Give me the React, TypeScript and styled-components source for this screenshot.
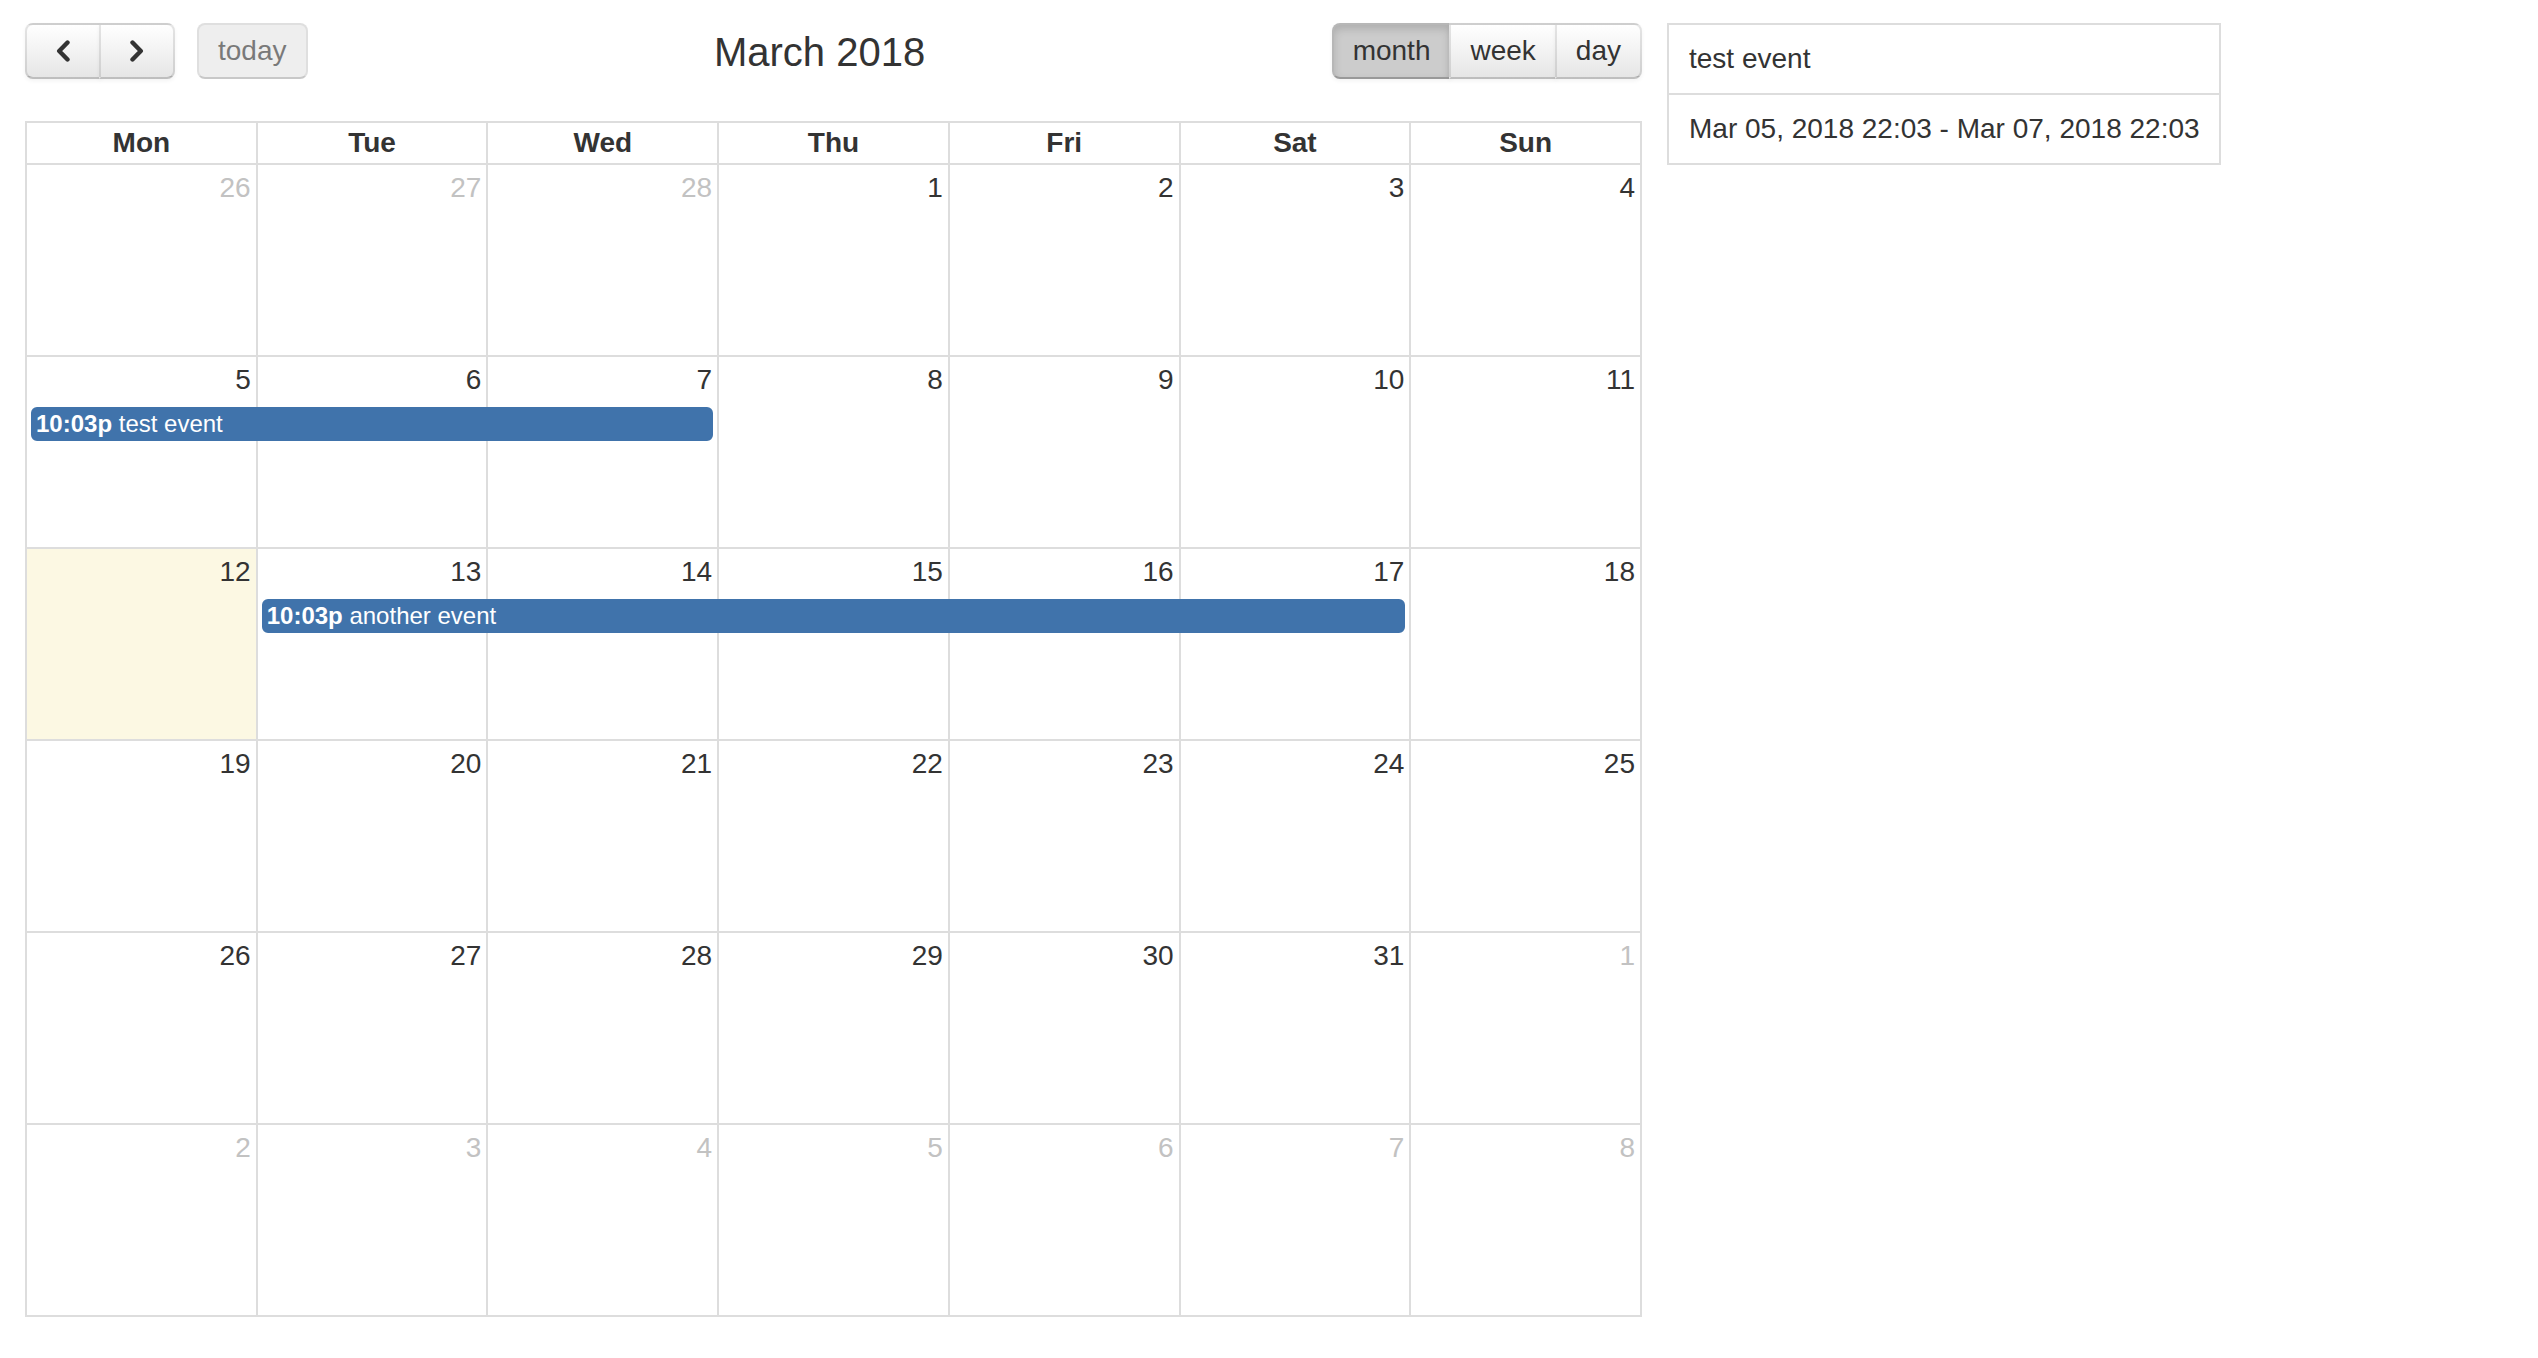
import styled, { createGlobalStyle, css } from "styled-components";

const GlobalStyle = createGlobalStyle`
  html, body {
    margin: 0;
    padding: 0;
    background: #fff;
  }
  body {
    font-family: "Liberation Sans", Arial, Helvetica, sans-serif;
    font-size: 28px;
    color: #333;
  }
  * {
    box-sizing: border-box;
  }
`;

const Page = styled.div`
  display: flex;
  align-items: flex-start;
  gap: 25px;
  padding: 23px 25px;
`;

const Calendar = styled.div`
  flex: none;
  width: 1617px;
`;

const Toolbar = styled.div`
  display: grid;
  grid-template-columns: auto 1fr auto;
  align-items: center;
  height: 56px;
  margin-bottom: 42px;
`;

const ToolbarLeft = styled.div`
  display: flex;
  gap: 22px;
`;

const ButtonGroup = styled.div`
  display: flex;
`;

const Title = styled.h2`
  margin: 0;
  font-size: 40px;
  font-weight: normal;
  line-height: 46px;
  text-align: center;
  padding-top: 2px;
`;

const Button = styled.button<{ $active?: boolean; $disabled?: boolean; $icon?: boolean }>`
  display: flex;
  align-items: center;
  justify-content: center;
  height: 56px;
  padding: 0 19px;
  ${(p) => p.$icon && css`
    width: 76px;
    padding: 0;
  `}
  font-family: inherit;
  font-size: 28px;
  color: #333;
  border: 2px solid;
  border-color: rgba(0, 0, 0, 0.1) rgba(0, 0, 0, 0.1) rgba(0, 0, 0, 0.25);
  background-color: #f5f5f5;
  background-image: linear-gradient(to bottom, #fff, #e6e6e6);
  box-shadow: inset 0 2px 0 rgba(255, 255, 255, 0.2), 0 2px 4px rgba(0, 0, 0, 0.05);
  border-radius: 0;
  cursor: pointer;

  & + & {
    margin-left: -2px;
  }
  &:first-child {
    border-top-left-radius: 8px;
    border-bottom-left-radius: 8px;
  }
  &:last-child {
    border-top-right-radius: 8px;
    border-bottom-right-radius: 8px;
  }

  ${(p) => p.$active && css`
    background-color: #ccc;
    background-image: none;
    box-shadow: inset 0 4px 8px rgba(0, 0, 0, 0.15), 0 2px 4px rgba(0, 0, 0, 0.05);
  `}

  ${(p) => p.$disabled && css`
    background-color: #e6e6e6;
    background-image: none;
    box-shadow: none;
    opacity: 0.65;
    cursor: default;
  `}
`;

const Month = styled.div`
  display: flex;
  flex-direction: column;
  gap: 2px;
  padding: 2px;
  background: #ddd;
`;

const HeadRow = styled.div`
  display: grid;
  grid-template-columns: repeat(7, 1fr);
  column-gap: 2px;
`;

const HeadCell = styled.div`
  height: 40px;
  line-height: 40px;
  background: #fff;
  text-align: center;
  font-weight: bold;
  font-size: 28px;
`;

const Week = styled.div`
  display: grid;
  grid-template-columns: repeat(7, 1fr);
  grid-template-rows: 44px auto 1fr;
  column-gap: 2px;
  height: 190px;
`;

const DayBg = styled.div<{ $col: number; $today?: boolean }>`
  grid-column: ${(p) => p.$col};
  grid-row: 1 / -1;
  background: ${(p) => (p.$today ? "#fcf8e3" : "#fff")};
`;

const DayNumber = styled.div<{ $col: number; $other?: boolean }>`
  grid-column: ${(p) => p.$col};
  grid-row: 1;
  justify-self: end;
  padding: 7px 5px 5px;
  line-height: 32px;
  font-size: 28px;
  color: ${(p) => (p.$other ? "#c2c2c2" : "#333")};
`;

const EventBar = styled.div<{ $start: number; $span: number }>`
  grid-column: ${(p) => p.$start} / span ${(p) => p.$span};
  grid-row: 2;
  margin: 6px 4px 0;
  height: 34px;
  padding: 0 3px;
  line-height: 30px;
  font-size: 24px;
  color: #fff;
  background: #4073ab;
  border: 2px solid #4073ab;
  border-radius: 6px;
  white-space: nowrap;
  overflow: hidden;
`;

const EventTime = styled.span`
  font-weight: bold;
`;

const Panel = styled.ul`
  flex: none;
  width: 554px;
  margin: 0;
  padding: 0;
  list-style: none;
  border: 2px solid #ddd;
`;

const PanelItem = styled.li`
  padding: 14px 20px;
  line-height: 40px;
  font-size: 28px;
  color: #333;
  white-space: nowrap;

  & + & {
    border-top: 2px solid #ddd;
  }
`;

const Chevron = ({ dir }: { dir: "left" | "right" }) => (
  <svg width="16" height="22" viewBox="0 0 16 22">
    <path
      d={dir === "left" ? "M12.5 2.5 L4.2 11 L12.5 19.5" : "M3.5 2.5 L11.8 11 L3.5 19.5"}
      fill="none"
      stroke="#333"
      strokeWidth="4.4"
      strokeLinecap="round"
      strokeLinejoin="round"
    />
  </svg>
);

type Day = { n: number; other?: boolean; today?: boolean };
type CalEvent = { start: number; span: number; time: string; title: string };

const dayNames = ["Mon", "Tue", "Wed", "Thu", "Fri", "Sat", "Sun"];

const weeks: { days: Day[]; events: CalEvent[] }[] = [
  {
    days: [
      { n: 26, other: true },
      { n: 27, other: true },
      { n: 28, other: true },
      { n: 1 },
      { n: 2 },
      { n: 3 },
      { n: 4 },
    ],
    events: [],
  },
  {
    days: [5, 6, 7, 8, 9, 10, 11].map((n) => ({ n })),
    events: [{ start: 1, span: 3, time: "10:03p", title: "test event" }],
  },
  {
    days: [12, 13, 14, 15, 16, 17, 18].map((n) => ({ n, today: n === 12 })),
    events: [{ start: 2, span: 5, time: "10:03p", title: "another event" }],
  },
  { days: [19, 20, 21, 22, 23, 24, 25].map((n) => ({ n })), events: [] },
  {
    days: [...[26, 27, 28, 29, 30, 31].map((n) => ({ n })), { n: 1, other: true }],
    events: [],
  },
  { days: [2, 3, 4, 5, 6, 7, 8].map((n) => ({ n, other: true })), events: [] },
];

export default function App() {
  return (
    <>
      <GlobalStyle />
      <Page>
        <Calendar>
          <Toolbar>
            <ToolbarLeft>
              <ButtonGroup>
                <Button $icon type="button" aria-label="prev">
                  <Chevron dir="left" />
                </Button>
                <Button $icon type="button" aria-label="next">
                  <Chevron dir="right" />
                </Button>
              </ButtonGroup>
              <ButtonGroup>
                <Button $disabled type="button">
                  today
                </Button>
              </ButtonGroup>
            </ToolbarLeft>
            <Title>March 2018</Title>
            <ButtonGroup>
              <Button $active type="button">
                month
              </Button>
              <Button type="button">week</Button>
              <Button type="button">day</Button>
            </ButtonGroup>
          </Toolbar>

          <Month>
            <HeadRow>
              {dayNames.map((d) => (
                <HeadCell key={d}>{d}</HeadCell>
              ))}
            </HeadRow>
            {weeks.map((w, wi) => (
              <Week key={wi}>
                {w.days.map((d, i) => (
                  <DayBg key={`bg${i}`} $col={i + 1} $today={d.today} />
                ))}
                {w.days.map((d, i) => (
                  <DayNumber key={`n${i}`} $col={i + 1} $other={d.other}>
                    {d.n}
                  </DayNumber>
                ))}
                {w.events.map((e) => (
                  <EventBar key={e.title} $start={e.start} $span={e.span}>
                    <EventTime>{e.time}</EventTime> {e.title}
                  </EventBar>
                ))}
              </Week>
            ))}
          </Month>
        </Calendar>

        <Panel>
          <PanelItem>test event</PanelItem>
          <PanelItem>Mar 05, 2018 22:03 - Mar 07, 2018 22:03</PanelItem>
        </Panel>
      </Page>
    </>
  );
}
